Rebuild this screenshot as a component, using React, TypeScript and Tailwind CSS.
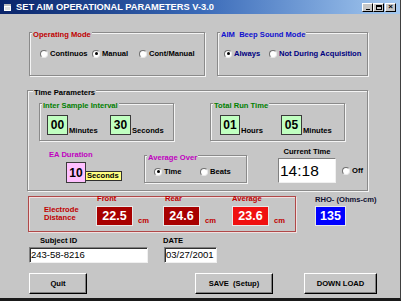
import React from "react";

const FONT = "font-['Liberation_Sans',Arial,sans-serif]";

function Radio({ on }: { on?: boolean }) {
  return (
    <span className="w-[8px] h-[8px] shrink-0 rounded-full bg-white border border-t-[#707070] border-l-[#707070] border-r-[#e8e8e8] border-b-[#e8e8e8] flex items-center justify-center">
      {on && <span className="w-[3px] h-[3px] rounded-full bg-black" />}
    </span>
  );
}

function Opt({ label, on, className = "", text = "text-black" }: { label: string; on?: boolean; className?: string; text?: string }) {
  return (
    <div className={`flex items-center gap-[2px] h-[9px] ${className}`}>
      <Radio on={on} />
      <span className={`${text} whitespace-nowrap`}>{label}</span>
    </div>
  );
}

function Group({ label, color, className = "", labelClass = "ml-[2px]", children }: { label: string; color: string; className?: string; labelClass?: string; children?: React.ReactNode }) {
  return (
    <div className={`flex flex-col border border-[#8a8a8a] shadow-[1px_1px_0_#f4f4f4,inset_1px_1px_0_#f4f4f4] ${className}`}>
      <div className={`-mt-[2px] px-[1px] w-fit bg-[#c6c6c6] whitespace-nowrap ${labelClass} ${color}`}>{label}</div>
      {children}
    </div>
  );
}

function NumBox({ value, bg, className = "" }: { value: string; bg: string; className?: string }) {
  return (
    <div className={`flex items-center justify-center border border-[#3a3a3a] text-[12px] leading-none text-black ${bg} ${className}`}>
      {value}
    </div>
  );
}

function Reading({ label, value, bg, className = "", labelPad = "" }: { label: string; value: string; bg: string; className?: string; labelPad?: string }) {
  return (
    <div className={`flex flex-col ${className}`}>
      <div className={`-mt-[2px] text-[#c00000] ${labelPad}`}>{label}</div>
      <div className="flex items-end mt-[3px]">
        <div className={`w-[37px] h-[20px] flex items-center justify-center border border-[#e8e8e8] text-white text-[12.5px] leading-none ${bg}`}>
          {value}
        </div>
        <span className="ml-[5px] mb-[1px] text-[#c00000]">cm</span>
      </div>
    </div>
  );
}

function Button({ label, className = "" }: { label: string; className?: string }) {
  return (
    <div className={`h-[21px] flex items-center justify-center border border-t-white border-l-white border-r-black border-b-black shadow-[inset_-1px_-1px_0_#808080] whitespace-pre ${className}`}>
      {label}
    </div>
  );
}

function Field({ value, className = "" }: { value: string; className?: string }) {
  return (
    <div className={`h-[16px] flex items-center pl-[1px] bg-white border border-t-[#808080] border-l-[#808080] border-r-[#f0f0f0] border-b-[#f0f0f0] shadow-[inset_1px_1px_0_#303030] font-normal text-[9.5px] ${className}`}>
      {value}
    </div>
  );
}

function WinBtn({ children }: { children: React.ReactNode }) {
  return (
    <div className="w-[11px] h-[9px] bg-[#c6c6c6] border border-t-white border-l-white border-r-black border-b-black flex items-center justify-center">
      {children}
    </div>
  );
}

function TitleBar() {
  return (
    <div className="h-[14px] shrink-0 flex items-center bg-linear-to-r from-[#0a246a] via-[#3a6ab8] to-[#a6caf0]">
      <svg width="7" height="7" viewBox="0 0 7 7" className="ml-[4px]">
        <rect x="0" y="0" width="7" height="7" fill="#fff" />
        <rect x="0" y="0" width="7" height="2" fill="#c0c0c0" />
        <rect x="1" y="3" width="5" height="3" fill="#e0e0e0" />
      </svg>
      <span className="ml-[5px] text-white text-[9.3px] whitespace-nowrap">SET AIM OPERATIONAL PARAMETERS V-3.0</span>
      <div className="ml-auto mr-[4px] flex items-center">
        <WinBtn>
          <span className="w-[4px] h-[1px] bg-black mt-[4px]" />
        </WinBtn>
        <WinBtn>
          <span className="w-[6px] h-[5px] border border-black border-t-2" />
        </WinBtn>
        <div className="ml-[1px]">
          <WinBtn>
            <span className="text-[8px] leading-none text-black">×</span>
          </WinBtn>
        </div>
      </div>
    </div>
  );
}

export default function App() {
  return (
    <div className={`${FONT} w-[401px] h-[301px] flex flex-col overflow-hidden bg-[#c6c6c6] border-r border-b-[3px] border-r-[#404040] border-b-[#1a1a1a] text-[7.6px] leading-[8px] font-bold text-black`}>
      <TitleBar />

      {/* mode groups */}
      <div className="flex mt-[18px] ml-[29px] gap-[12px]">
        <Group label="Operating Mode" color="text-[#c00000]" className="w-[176px] h-[44px]">
          <div className="flex mt-[10px] ml-[10px]">
            <Opt label="Continuos" className="w-[52px]" />
            <Opt label="Manual" on className="w-[47px]" />
            <Opt label="Cont/Manual" />
          </div>
        </Group>
        <Group label="AIM  Beep Sound Mode" color="text-[#1010d0] whitespace-pre" className="w-[151px] h-[44px]">
          <div className="flex mt-[10px] ml-[6px]">
            <Opt label="Always" on text="text-[#000080]" className="w-[45px]" />
            <Opt label="Not During Acquisition" text="text-[#000080]" />
          </div>
        </Group>
      </div>

      {/* time parameters */}
      <Group label="Time Parameters" color="text-black" labelClass="ml-[5px]" className="mt-[14px] ml-[27px] w-[341px] h-[101px]">
        <div className="flex mt-[6px] ml-[11px] gap-[36px]">
          <Group label="Inter Sample Interval" color="text-[#008000]" className="w-[135px] h-[38px]">
            <div className="flex items-end mt-[5px] ml-[7px]">
              <div className="flex items-end w-[63px]">
                <NumBox value="00" bg="bg-[#c0ffc0]" className="w-[21px] h-[20px]" />
                <span className="ml-[1px]">Minutes</span>
              </div>
              <div className="flex items-end">
                <NumBox value="30" bg="bg-[#c0ffc0]" className="w-[21px] h-[20px]" />
                <span className="ml-[1px]">Seconds</span>
              </div>
            </div>
          </Group>
          <Group label="Total Run Time" color="text-[#008000]" className="w-[135px] h-[38px]">
            <div className="flex items-end mt-[5px] ml-[9px]">
              <div className="flex items-end w-[61px]">
                <NumBox value="01" bg="bg-[#c0ffc0]" className="w-[20px] h-[20px]" />
                <span className="ml-[1px]">Hours</span>
              </div>
              <div className="flex items-end">
                <NumBox value="05" bg="bg-[#c0ffc0]" className="w-[21px] h-[20px]" />
                <span className="ml-[1px]">Minutes</span>
              </div>
            </div>
          </Group>
        </div>

        <div className="flex items-start mt-[10px]">
          <div className="flex flex-col ml-[21px] w-[95px]">
            <div className="text-[#c000c0]">EA Duration</div>
            <div className="flex items-end mt-[3px] ml-[17px]">
              <NumBox value="10" bg="bg-[#ffc0ff]" className="w-[20px] h-[21px]" />
              <div className="mb-[2px] w-[36px] h-[10px] flex items-center pl-[1px] bg-[#ffff80] border border-[#303030] border-l-0">Seconds</div>
            </div>
          </div>
          <Group label="Average Over" color="text-[#c000c0]" className="mt-[4px] w-[103px] h-[28px]">
            <div className="flex mt-[5px] ml-[9px]">
              <Opt label="Time" on className="w-[46px]" />
              <Opt label="Beats" />
            </div>
          </Group>
          <div className="flex flex-col items-center -mt-[3px] ml-[31px] w-[58px]">
            <div>Current Time</div>
            <div className="mt-[2px] w-[58px] h-[25px] flex items-center pl-[1px] bg-white border border-t-[#808080] border-l-[#808080] border-r-[#f0f0f0] border-b-[#f0f0f0] font-normal text-[15.5px] leading-none">
              14:18
            </div>
          </div>
          <Opt label="Off" className="mt-[15px] ml-[6px]" />
        </div>
      </Group>

      {/* electrode distance */}
      <div className="flex items-start mt-[5px]">
        <div className="ml-[28px] w-[268px] h-[36px] flex items-start border border-[#b04848] shadow-[1px_1px_0_#f0e0e0,inset_1px_1px_0_#f0e0e0]">
          <div className="mt-[9px] ml-[15px] w-[52px] text-[#c00000]">
            Electrode
            <br />
            Distance
          </div>
          <Reading label="Front" value="22.5" bg="bg-[#a80000]" className="w-[67px]" labelPad="pl-[1px]" />
          <Reading label="Rear" value="24.6" bg="bg-[#a80000]" className="w-[69px]" labelPad="pl-[2px]" />
          <Reading label="Average" value="23.6" bg="bg-[#f01010]" />
        </div>
        <div className="flex flex-col ml-[19px]">
          <div className="text-[#101030]">RHO- (Ohms-cm)</div>
          <div className="mt-[2px] w-[31px] h-[20px] flex items-center justify-center bg-[#0000ff] border border-[#e8e8e8] text-white text-[12.5px] leading-none">
            135
          </div>
        </div>
      </div>

      {/* subject / date */}
      <div className="flex mt-[5px] ml-[29px]">
        <div className="flex flex-col">
          <div className="pl-[11px]">Subject ID</div>
          <Field value="243-58-8216" className="mt-[2px] w-[119px]" />
        </div>
        <div className="flex flex-col ml-[15px]">
          <div>DATE</div>
          <Field value="03/27/2001" className="mt-[2px] ml-[1px] w-[53px]" />
        </div>
      </div>

      {/* buttons */}
      <div className="flex mt-[10px] ml-[29px]">
        <Button label="Quit" className="w-[58px]" />
        <Button label="SAVE  (Setup)" className="ml-[108px] w-[78px]" />
        <Button label="DOWN LOAD" className="ml-[31px] w-[73px]" />
      </div>
    </div>
  );
}
